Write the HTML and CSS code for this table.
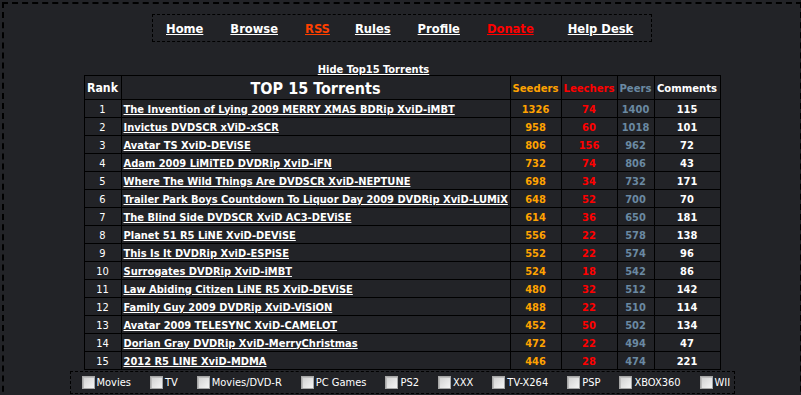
FILE: index.html
```html
<!DOCTYPE html>
<html>
<head>
<meta charset="utf-8">
<title>Top 15 Torrents</title>
<link rel="stylesheet" href="styles.css">
</head>
<body>
<div class="page">
  <nav class="nav">
    <a href="#">Home</a>
    <a href="#">Browse</a>
    <a href="#" class="rss">RSS</a>
    <a href="#" class="rules">Rules</a>
    <a href="#">Profile</a>
    <a href="#" class="donate">Donate</a>
    <a href="#" class="help">Help Desk</a>
  </nav>

  <div class="hide"><a href="#">Hide Top15 Torrents</a></div>

  <table class="top">
    <colgroup>
      <col class="c-rank"><col class="c-name"><col class="c-seed"><col class="c-leech"><col class="c-peer"><col class="c-com">
    </colgroup>
    <thead>
      <tr>
        <th class="h-rank">Rank</th>
        <th class="h-title">TOP 15 Torrents</th>
        <th class="seed">Seeders</th>
        <th class="leech">Leechers</th>
        <th class="peer">Peers</th>
        <th class="com">Comments</th>
      </tr>
    </thead>
    <tbody>
      <tr><td class="rank">1</td><td class="name"><a href="#">The Invention of Lying 2009 MERRY XMAS BDRip XviD-iMBT</a></td><td class="seed">1326</td><td class="leech">74</td><td class="peer">1400</td><td class="com">115</td></tr>
      <tr><td class="rank">2</td><td class="name"><a href="#">Invictus DVDSCR xViD-xSCR</a></td><td class="seed">958</td><td class="leech">60</td><td class="peer">1018</td><td class="com">101</td></tr>
      <tr><td class="rank">3</td><td class="name"><a href="#">Avatar TS XviD-DEViSE</a></td><td class="seed">806</td><td class="leech">156</td><td class="peer">962</td><td class="com">72</td></tr>
      <tr><td class="rank">4</td><td class="name"><a href="#">Adam 2009 LiMiTED DVDRip XviD-iFN</a></td><td class="seed">732</td><td class="leech">74</td><td class="peer">806</td><td class="com">43</td></tr>
      <tr><td class="rank">5</td><td class="name"><a href="#">Where The Wild Things Are DVDSCR XviD-NEPTUNE</a></td><td class="seed">698</td><td class="leech">34</td><td class="peer">732</td><td class="com">171</td></tr>
      <tr><td class="rank">6</td><td class="name"><a href="#">Trailer Park Boys Countdown To Liquor Day 2009 DVDRip XviD-LUMiX</a></td><td class="seed">648</td><td class="leech">52</td><td class="peer">700</td><td class="com">70</td></tr>
      <tr><td class="rank">7</td><td class="name"><a href="#">The Blind Side DVDSCR XviD AC3-DEViSE</a></td><td class="seed">614</td><td class="leech">36</td><td class="peer">650</td><td class="com">181</td></tr>
      <tr><td class="rank">8</td><td class="name"><a href="#">Planet 51 R5 LiNE XviD-DEViSE</a></td><td class="seed">556</td><td class="leech">22</td><td class="peer">578</td><td class="com">138</td></tr>
      <tr><td class="rank">9</td><td class="name"><a href="#">This Is It DVDRip XviD-ESPiSE</a></td><td class="seed">552</td><td class="leech">22</td><td class="peer">574</td><td class="com">96</td></tr>
      <tr><td class="rank">10</td><td class="name"><a href="#">Surrogates DVDRip XviD-iMBT</a></td><td class="seed">524</td><td class="leech">18</td><td class="peer">542</td><td class="com">86</td></tr>
      <tr><td class="rank">11</td><td class="name"><a href="#">Law Abiding Citizen LiNE R5 XviD-DEViSE</a></td><td class="seed">480</td><td class="leech">32</td><td class="peer">512</td><td class="com">142</td></tr>
      <tr><td class="rank">12</td><td class="name"><a href="#">Family Guy 2009 DVDRip XviD-ViSiON</a></td><td class="seed">488</td><td class="leech">22</td><td class="peer">510</td><td class="com">114</td></tr>
      <tr><td class="rank">13</td><td class="name"><a href="#">Avatar 2009 TELESYNC XviD-CAMELOT</a></td><td class="seed">452</td><td class="leech">50</td><td class="peer">502</td><td class="com">134</td></tr>
      <tr><td class="rank">14</td><td class="name"><a href="#">Dorian Gray DVDRip XviD-MerryChristmas</a></td><td class="seed">472</td><td class="leech">22</td><td class="peer">494</td><td class="com">47</td></tr>
      <tr><td class="rank">15</td><td class="name"><a href="#">2012 R5 LINE XviD-MDMA</a></td><td class="seed">446</td><td class="leech">28</td><td class="peer">474</td><td class="com">221</td></tr>
    </tbody>
  </table>

  <div class="cats">
    <label class="cat"><input type="checkbox"><span>Movies</span></label>
    <label class="cat"><input type="checkbox"><span>TV</span></label>
    <label class="cat"><input type="checkbox"><span>Movies/DVD-R</span></label>
    <label class="cat"><input type="checkbox"><span>PC Games</span></label>
    <label class="cat"><input type="checkbox"><span>PS2</span></label>
    <label class="cat"><input type="checkbox"><span>XXX</span></label>
    <label class="cat"><input type="checkbox"><span>TV-X264</span></label>
    <label class="cat"><input type="checkbox"><span>PSP</span></label>
    <label class="cat"><input type="checkbox"><span>XBOX360</span></label>
    <label class="cat"><input type="checkbox"><span>WII</span></label>
  </div>
</div>
</body>
</html>
```

FILE: styles.css
```css
html, body {
  margin: 0;
  padding: 0;
  background: #222327;
  overflow: hidden;
}
body {
  font-family: "DejaVu Sans Condensed", "DejaVu Sans", sans-serif;
  font-stretch: condensed;
  color: #fff;
}
.page {
  margin: 2px 0 0 2px;
  width: 800px;
  height: 420px;
  box-sizing: border-box;
  border: 2px dashed #000;
}
a { color: #fff; }

.nav {
  width: 500px;
  box-sizing: border-box;
  margin: 10px auto 0;
  border: 1px dashed #000;
  display: flex;
  gap: 27px;
  padding: 6px 0 4px 13px;
  font-size: 12.8px;
  line-height: 16px;
  font-weight: bold;
  white-space: nowrap;
}
.nav a { text-decoration: underline; flex-shrink: 0; }
.nav a.rss { color: #ff4000; }
.nav a.rules { margin-left: -2px; }
.nav a.donate { color: #ff0000; }
.nav a.help { margin-left: 7px; }

.hide {
  width: 637px;
  margin: 22px auto 0;
  box-sizing: border-box;
  padding-right: 57px;
  text-align: center;
  font-size: 11px;
  line-height: 12px;
  font-weight: bold;
}

.top {
  width: 637px;
  margin: -1px auto 0;
  border-collapse: collapse;
  table-layout: fixed;
  border: 1px solid #000;
}
.c-rank { width: 37px; }
.c-name { width: 389px; }
.c-seed { width: 51px; }
.c-leech { width: 56px; }
.c-peer { width: 37px; }
.c-com { width: 66px; }

.top th, .top td {
  border: 1px solid #000;
  padding: 1px 0 0;
  text-align: center;
  vertical-align: middle;
  white-space: nowrap;
  overflow: hidden;
}
.top th {
  height: 22px;
  font-size: 11.2px;
  font-weight: bold;
}
.top th.h-rank { font-size: 12.2px; }
.top th.h-title { font-size: 16px; }
.top td {
  height: 16px;
  font-size: 11px;
  font-weight: bold;
}
.top td.rank { font-size: 11px; font-weight: normal; }
.top td.name {
  text-align: left;
  padding-left: 2px;
  font-size: 11px;
}
.seed { color: #ffa200; }
.leech { color: #ff0000; }
.peer { color: #6a89a2; }
.com { color: #fff; }

.cats {
  width: 665px;
  box-sizing: border-box;
  margin: 1px auto 0;
  border: 1px dashed #000;
  height: 23px;
  padding: 0 0 0 11px;
  display: flex;
  align-items: center;
  gap: 19px;
  font-size: 11px;
  white-space: nowrap;
}
.cat {
  display: flex;
  align-items: center;
  gap: 2px;
  flex-shrink: 0;
}
.cat input {
  appearance: none;
  -webkit-appearance: none;
  margin: 0;
  width: 13px;
  height: 13px;
  box-sizing: border-box;
  border: 1px solid #a7a7a7;
  background: linear-gradient(135deg, #cfcfcf, #f5f5f5);
  box-shadow: inset 1px 1px 0 #bcbcbc;
}
```
